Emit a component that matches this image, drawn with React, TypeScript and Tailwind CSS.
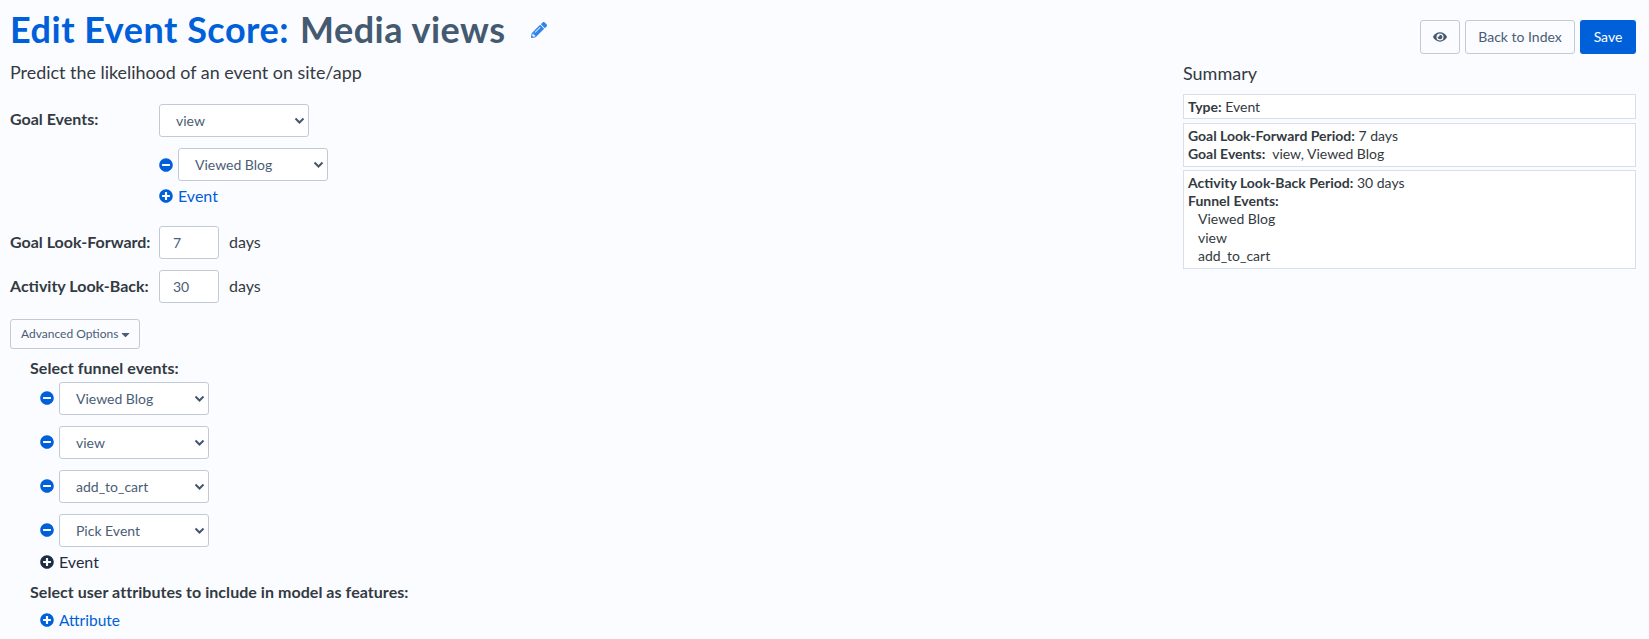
import React from "react";
import { FaPencilAlt, FaEye, FaMinusCircle, FaPlusCircle, FaCaretDown } from "react-icons/fa";

function Select({ value }: { value: string }) {
  return (
    <div className="relative w-[150px] h-[33.5px] bg-white border border-[#c2cad8] rounded-[3px] flex items-center pl-[16px] text-[14px] text-[#4a5d75]">
      <span>{value}</span>
      <svg className="absolute right-[3px] top-[12px]" width="11" height="8" viewBox="0 0 11 8" fill="none">
        <path d="M1.5 1.5 5.5 5.5 9.5 1.5" stroke="#46566b" strokeWidth="2" />
      </svg>
    </div>
  );
}

function MinusRow({ value }: { value: string }) {
  return (
    <div className="flex items-center gap-[5px]">
      <FaMinusCircle className="text-[#0060d9] w-[14px] h-[14px]" />
      <Select value={value} />
    </div>
  );
}

function Line({ children }: { children: React.ReactNode }) {
  return <div className="h-[18.2px] leading-[18.2px]">{children}</div>;
}

export default function App() {
  return (
    <div className="h-[639px] overflow-hidden bg-[#fbfcff] pl-[10px] pr-[13px] pt-[10px] font-['Lato','Open_Sans',sans-serif] text-[#333a42]">
      <div className="flex justify-between items-start">
        <h1 className="flex items-center h-[42px] pb-[4px] text-[36px] leading-[38px] font-bold text-[#0060d9] tracking-[0.5px]">
          <span>Edit Event Score:</span>
          <span className="text-[#445a70] ml-[11px]">Media views</span>
          <FaPencilAlt className="text-[#2f83ea] w-[16px] h-[16px] ml-[25px] mt-[2px]" />
        </h1>
        <div className="flex gap-[5px] mt-[10px]">
          <button className="w-[40px] h-[33.5px] border border-[#c2cad8] rounded-[3px] flex items-center justify-center text-[#445a70]">
            <FaEye className="w-[14px] h-[14px]" />
          </button>
          <button className="w-[110px] h-[33.5px] border border-[#c2cad8] rounded-[3px] text-[14px] text-[#4a5d75]">Back to Index</button>
          <button className="w-[56px] h-[33.5px] rounded-[3px] text-[14px] bg-[#0060d9] text-white">Save</button>
        </div>
      </div>
      <div className="flex justify-between">
        <div>
          <p className="text-[17.9px] leading-[24px] mt-[6px]">Predict the likelihood of an event on site/app</p>
          <div className="flex mt-[20.3px]">
            <div className="w-[149px] text-[16px] font-bold leading-[24px] pt-[3px]">Goal Events:</div>
            <div className="flex flex-col items-start">
              <Select value="view" />
              <div className="mt-[10.5px]"><MinusRow value="Viewed Blog" /></div>
              <div className="flex items-center gap-[5px] mt-[4px] text-[16px] leading-[22px] text-[#0060d9]">
                <FaPlusCircle className="w-[14px] h-[14px]" />
                Event
              </div>
            </div>
          </div>
          <div className="flex items-center mt-[18.3px] h-[33.5px]">
            <div className="w-[149px] text-[16px] font-bold">Goal Look-Forward:</div>
            <div className="w-[60px] h-[33.5px] bg-white border border-[#c2cad8] rounded-[3px] flex items-center pl-[13px] text-[14px] text-[#4a5d75]">7</div>
            <span className="ml-[10px] text-[16px]">days</span>
          </div>
          <div className="flex items-center mt-[10.5px] h-[33.5px]">
            <div className="w-[149px] text-[16px] font-bold">Activity Look-Back:</div>
            <div className="w-[60px] h-[33.5px] bg-white border border-[#c2cad8] rounded-[3px] flex items-center pl-[13px] text-[14px] text-[#4a5d75]">30</div>
            <span className="ml-[10px] text-[16px]">days</span>
          </div>
          <button className="flex items-center gap-[1px] w-[130px] h-[29.5px] mt-[16px] pl-[10px] pt-[1px] border border-[#c2cad8] rounded-[3px] text-[12px] text-[#4a5d75]">
            Advanced Options <FaCaretDown className="w-[13px] h-[13px]" />
          </button>
          <div className="pl-[20px]">
            <div className="text-[16px] font-bold leading-[20px] mt-[9.5px] tracking-[0.05px]">Select funnel events:</div>
            <div className="pl-[10px] mt-[3.6px] flex flex-col gap-[10.5px]">
              <MinusRow value="Viewed Blog" />
              <MinusRow value="view" />
              <MinusRow value="add_to_cart" />
              <MinusRow value="Pick Event" />
            </div>
            <div className="pl-[10px] flex items-center gap-[5px] mt-[3px] text-[16px] leading-[24px] text-[#1f2d42]">
              <FaPlusCircle className="w-[14px] h-[14px]" />
              Event
            </div>
            <div className="text-[16px] font-bold leading-[20px] mt-[7.7px] tracking-[0.05px]">Select user attributes to include in model as features:</div>
            <div className="pl-[10px] flex items-center gap-[5px] mt-[6px] text-[15.5px] leading-[24px] text-[#0060d9]">
              <FaPlusCircle className="w-[14px] h-[14px]" />
              Attribute
            </div>
          </div>
        </div>
        <div className="w-[453px] text-[14px]">
          <div className="text-[18px] leading-[24px] mt-[7px]">Summary</div>
          <div className="mt-[9.3px] flex flex-col gap-[3.5px]">
            <div className="bg-white border border-[#d5e0ec] px-[4px] py-[2.75px]"><Line><b>Type:</b> Event</Line></div>
            <div className="bg-white border border-[#d5e0ec] px-[4px] py-[2.75px]">
              <Line><b>Goal Look-Forward Period:</b> 7 days</Line>
              <Line><b>Goal Events:</b>&nbsp; view, Viewed Blog</Line>
            </div>
            <div className="bg-white border border-[#d5e0ec] px-[4px] py-[2.75px]">
              <Line><b>Activity Look-Back Period:</b> 30 days</Line>
              <Line><b>Funnel Events:</b></Line>
              <div className="pl-[10px]">
                <Line>Viewed Blog</Line>
                <Line>view</Line>
                <Line>add_to_cart</Line>
              </div>
            </div>
          </div>
        </div>
      </div>
    </div>
  );
}
